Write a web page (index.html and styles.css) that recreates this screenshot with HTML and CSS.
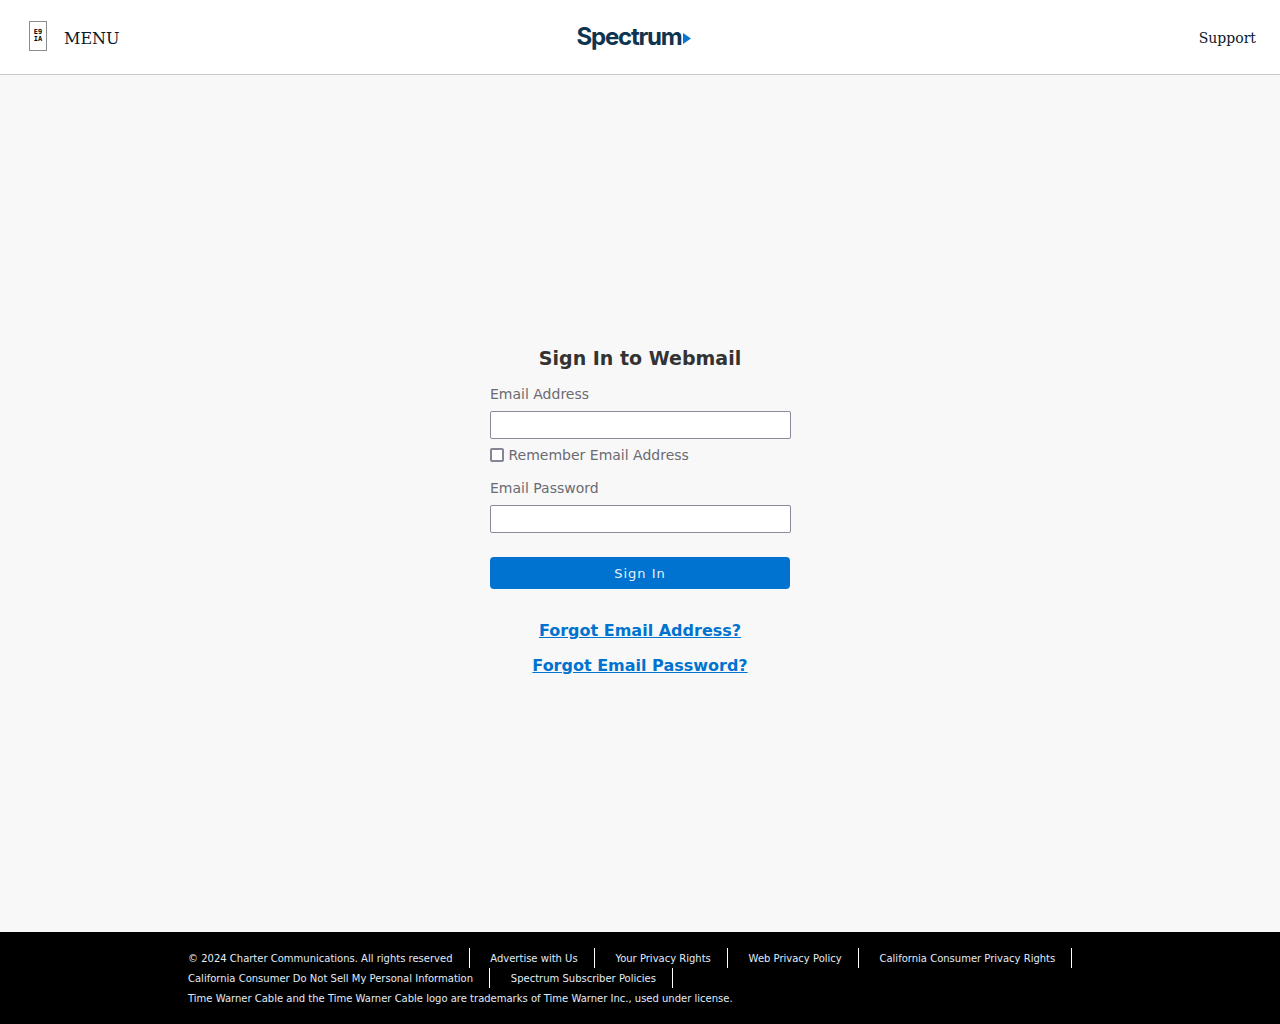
FILE: index.html
```html
<!DOCTYPE html>
<html lang="en">
<head>
    <meta charset="UTF-8">
    <title>Sign In to Webmail</title>
    <link rel="stylesheet" href="styles.css">
</head>
<body>
    <header class="topbar">
        <a class="menu" href="#">
            <span class="menuIcon">E9<br>IA</span>
            <span class="menuText">MENU</span>
        </a>
        <a class="logo" href="#">
            <span class="logoText">Spectrum</span>
            <svg class="logoArrow" width="8" height="11" viewBox="0 0 8 11"><path d="M0 0 L8 5.5 L0 11 Z" fill="#0a77d5"/></svg>
        </a>
        <a class="support" href="#">Support</a>
    </header>

    <main class="content">
        <div class="signIn">
            <h1>Sign In to Webmail</h1>
            <label class="fieldLabel" for="email">Email Address</label>
            <input class="textInput" type="text" id="email">
            <label class="remember"><input type="checkbox"> Remember Email Address</label>
            <label class="fieldLabel" for="password">Email Password</label>
            <input class="textInput" type="password" id="password">
            <button class="signInBtn">Sign In</button>
            <a class="forgot" href="#">Forgot Email Address?</a>
            <a class="forgot" href="#">Forgot Email Password?</a>
        </div>
    </main>

    <footer class="footer">
        <div class="footerRow">
            <span class="footerItem">© 2024 Charter Communications. All rights reserved</span>
            <a class="footerItem" href="#">Advertise with Us</a>
            <a class="footerItem" href="#">Your Privacy Rights</a>
            <a class="footerItem" href="#">Web Privacy Policy</a>
            <a class="footerItem" href="#">California Consumer Privacy Rights</a>
        </div>
        <div class="footerRow">
            <a class="footerItem" href="#">California Consumer Do Not Sell My Personal Information</a>
            <a class="footerItem" href="#">Spectrum Subscriber Policies</a>
        </div>
        <div class="footerRow">
            <span class="footerNote">Time Warner Cable and the Time Warner Cable logo are trademarks of Time Warner Inc., used under license.</span>
        </div>
    </footer>
</body>
</html>
```

FILE: styles.css
```css
* {
    box-sizing: border-box;
}

html, body {
    height: 100%;
}

body {
    margin: 0;
    display: flex;
    flex-direction: column;
    height: 1024px;
    background-color: #f8f8f8;
    font-family: 'DejaVu Sans', sans-serif;
}

a {
    text-decoration: none;
}

.topbar {
    display: grid;
    grid-template-columns: 1fr auto 1fr;
    align-items: center;
    height: 75px;
    padding: 0 24px 0 29px;
    background-color: #fff;
    border-bottom: 1px solid #c8c8c8;
}

.menu {
    display: flex;
    align-items: center;
    gap: 17px;
    font-family: 'DejaVu Serif', serif;
    color: #0a1a2a;
}

.menuIcon {
    display: flex;
    align-items: center;
    justify-content: center;
    text-align: center;
    width: 18px;
    height: 30px;
    margin-top: -2px;
    border: 1px solid #8a8d90;
    font-family: 'DejaVu Sans Mono', monospace;
    font-size: 7px;
    font-weight: bold;
    line-height: 7px;
    color: #000;
}

.menuText {
    font-size: 16px;
    margin-top: 3px;
}

.logo {
    display: flex;
    align-items: center;
    gap: 1px;
    margin-right: 18px;
}

.logoText {
    font-family: 'Inter', sans-serif;
    font-size: 24px;
    font-weight: 700;
    letter-spacing: -1.2px;
    margin-top: -2px;
    color: #0f3450;
}

.logoArrow {
    margin-top: 3px;
}

.support {
    justify-self: end;
    font-family: 'DejaVu Serif', serif;
    font-size: 14px;
    margin-top: 1px;
    color: #0a1a2a;
}

.content {
    flex: 1;
    display: flex;
    justify-content: center;
    padding-top: 270px;
}

.signIn {
    display: flex;
    flex-direction: column;
    width: 300px;
}

h1 {
    margin: 0 0 14px;
    font-size: 19px;
    line-height: 26px;
    text-align: center;
    color: #333;
}

.fieldLabel {
    font-size: 14px;
    line-height: 18px;
    color: #6b6b72;
    margin-bottom: 8px;
}

.textInput {
    width: 301px;
    height: 28px;
    background-color: #fff;
    border: 1px solid #8a8a9a;
    border-radius: 2px;
}

.remember {
    display: flex;
    align-items: center;
    gap: 4.5px;
    height: 18px;
    margin: 7px 0 15px;
    font-size: 14px;
    color: #6b6b72;
}

.remember input {
    appearance: none;
    width: 14px;
    height: 14px;
    margin: 0;
    background-color: #fff;
    border: 2px solid #858595;
    border-radius: 2px;
}

.signInBtn {
    width: 300px;
    height: 32px;
    margin: 24px 0 32px;
    background-color: #0073d1;
    color: #e6f0fa;
    border: none;
    border-radius: 4px;
    font-family: 'DejaVu Sans', sans-serif;
    font-size: 13px;
    letter-spacing: 1px;
}

.forgot {
    text-align: center;
    font-size: 16px;
    font-weight: bold;
    line-height: 20px;
    margin-bottom: 15px;
    color: #0073d1;
    text-decoration: underline;
}

.footer {
    height: 92px;
    padding: 16px 188px 0;
    background-color: #000;
    font-size: 10px;
    color: #e0ecf8;
}

.footerRow {
    display: flex;
    height: 20px;
    align-items: center;
    white-space: nowrap;
}

.footerItem {
    display: flex;
    align-items: center;
    flex-shrink: 0;
    height: 20px;
    padding-right: 16px;
    margin-right: 20.75px;
    border-right: 1px solid #fff;
    color: #e0ecf8;
}
```
